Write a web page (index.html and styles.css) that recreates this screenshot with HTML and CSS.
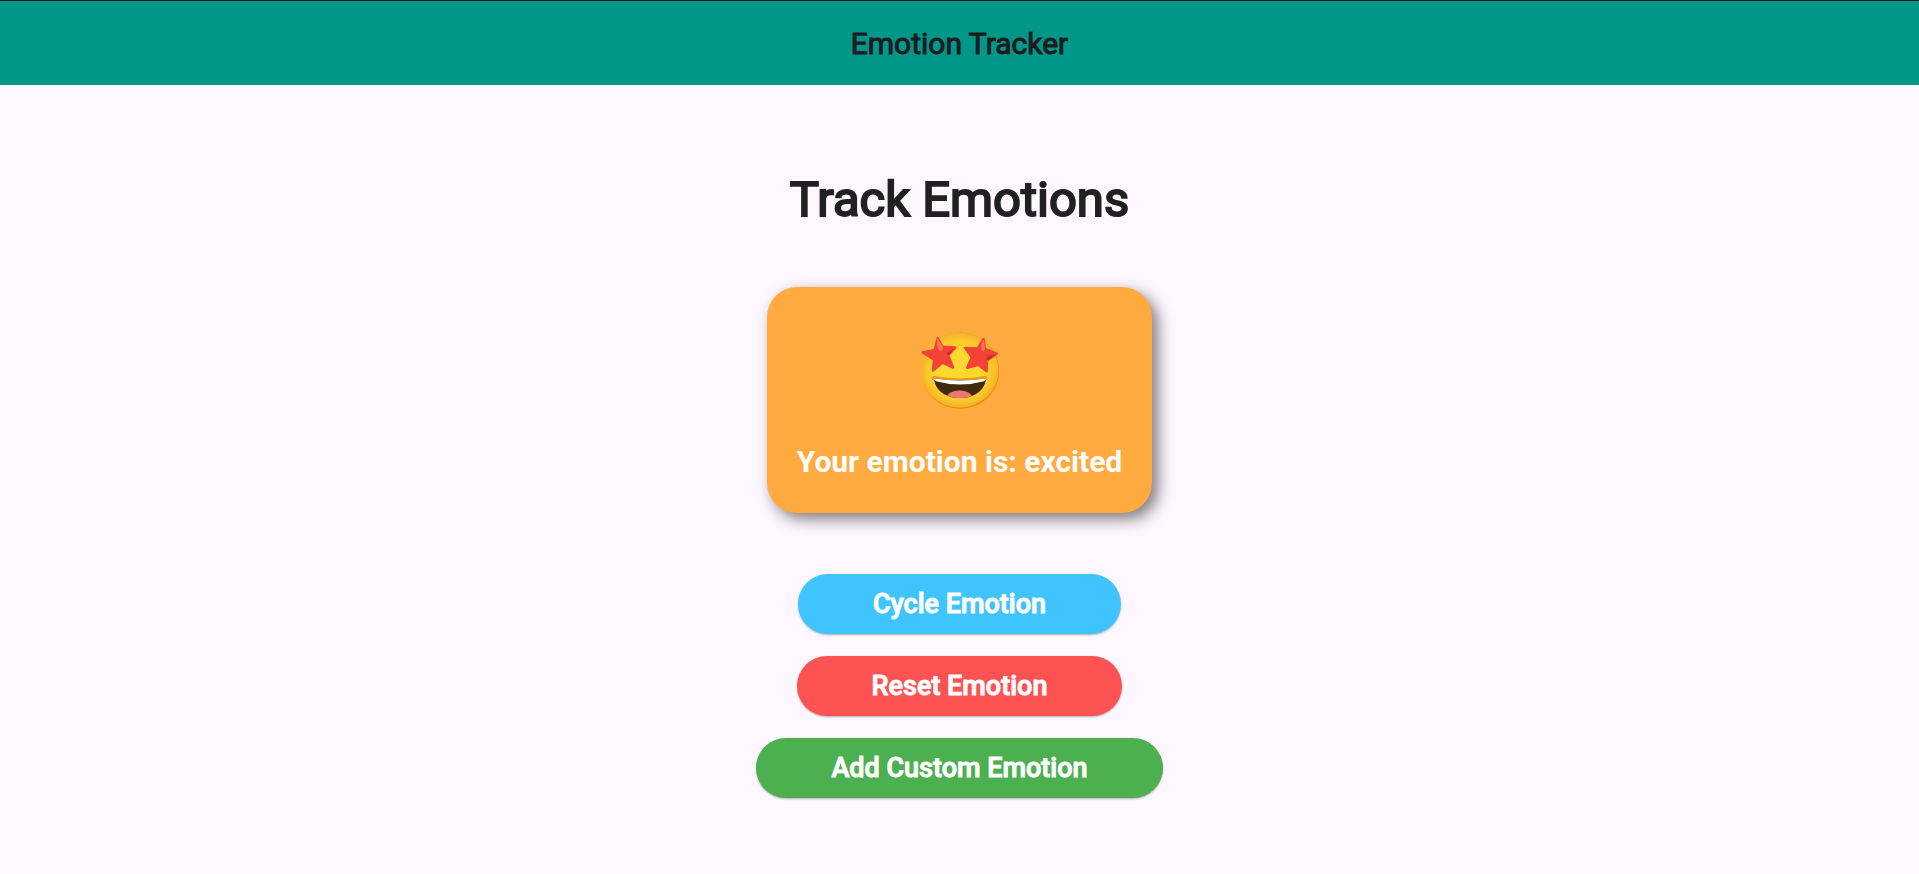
FILE: index.html
```html
<!DOCTYPE html>
<html lang="en">
<head>
<meta charset="utf-8">
<meta name="viewport" content="width=device-width, initial-scale=1">
<title>Emotion Tracker</title>
<link rel="stylesheet" href="styles.css">
</head>
<body>
<header class="app-bar">
  <h1 class="app-title">Emotion Tracker</h1>
</header>
<main class="content">
  <h2 class="heading">Track Emotions</h2>
  <section class="card">
    <svg class="emoji" viewBox="0 0 120 100" role="img" aria-label="Star-struck face">
      <defs>
        <radialGradient id="face" cx="0.5" cy="0.5" r="0.5">
          <stop offset="0.5" stop-color="#fdd82f"/>
          <stop offset="0.8" stop-color="#fbca2b"/>
          <stop offset="1" stop-color="#f5b02c"/>
        </radialGradient>
        <clipPath id="mouth"><path d="M34 58.5Q60 62.5 86 58.5C85 70 75 78 60 78S35 70 34 58.5Z"/></clipPath>
      </defs>
      <ellipse cx="60.2" cy="50.8" rx="39" ry="38.2" fill="#eb8f00"/>
      <ellipse cx="59.5" cy="50" rx="39" ry="37.6" fill="url(#face)"/>
      <path d="M34 58.3Q60 63 85 58.3" fill="none" stroke="#e79a12" stroke-width="4.5" stroke-linecap="round"/>
      <g clip-path="url(#mouth)">
        <path d="M30 55H90V80H30Z" fill="#422b0d"/>
        <path d="M32 56H88L85 61Q60 68 35 61Z" fill="#fff"/>
        <ellipse cx="59.5" cy="77.5" rx="12.5" ry="7" fill="#ed7770"/>
      </g>
      <path d="M37.7 18L42.4 26.8L55.3 27.5L48.3 35.5L53.2 47.6L42.6 42.6L33 50.5L34 39.7L22.8 32.4L34.6 29.8Z" fill="#f44336" stroke="#f44336" stroke-width="2.4" stroke-linejoin="round"/>
      <path d="M83.6 19L84.9 28.8L97 33.6L86.9 40.5L86.6 51.2L78.3 44.8L67.2 47.8L71.8 37.2L65 27.9L77.5 28.5Z" fill="#f44336" stroke="#f44336" stroke-width="2.4" stroke-linejoin="round"/>
      <path d="M37.7 18.7C36.3 22 37.2 28 39.5 30.5C41.5 31.3 43.3 29.8 43 27.5Z" fill="#ff7555"/>
      <path d="M83.7 19.5C81.5 22 80.5 28 82 30.5C84 31.5 85.3 30 85 28Z" fill="#ff7555"/>
      <path d="M55 28C52 30.5 48 31.8 46.8 33.5C46.8 34.5 47.7 35.2 48.8 35Z" fill="#c62828"/>
      <path d="M97 34C92 35.5 88 35.7 86.2 38.5C86.3 39.8 87 40.3 88 39.8Z" fill="#c62828"/>
    </svg>
    <p class="status">Your emotion is: excited</p>
  </section>
  <div class="actions">
    <button type="button" class="btn btn-cycle">Cycle Emotion</button>
    <button type="button" class="btn btn-reset">Reset Emotion</button>
    <button type="button" class="btn btn-add">Add Custom Emotion</button>
  </div>
</main>
</body>
</html>
```
FILE: styles.css
```css
* {
  box-sizing: border-box;
}

body {
  margin: 0;
  min-height: 100vh;
  background: #fef7ff;
  color: #1d1b20;
  font-family: Roboto, "Liberation Sans", sans-serif;
  font-weight: 400;
  -webkit-text-stroke: 1px currentColor;
}

h1, h2, p {
  margin: 0;
  font-weight: 400;
}

.app-bar {
  display: flex;
  justify-content: center;
  padding: 25px 24px 23px;
  border-top: 1px solid #0a1a18;
  background: #009688;
}

.app-title {
  font-size: 30px;
  line-height: 36px;
}

.content {
  display: flex;
  flex-direction: column;
  align-items: center;
  gap: 61px;
  padding: 89px 24px 60px;
}

.heading {
  font-size: 49px;
  line-height: 52px;
  color: #212121;
  -webkit-text-stroke-width: 2px;
}

.card {
  display: flex;
  flex-direction: column;
  align-items: center;
  gap: 24px;
  padding: 33px 30px;
  border-radius: 30px;
  background: #ffab40;
  box-shadow: 6px 6px 15px rgba(0, 0, 0, 0.5);
}

.emoji {
  display: block;
  width: 120px;
  height: 100px;
}

.status {
  color: #fff;
  font-size: 30px;
  font-weight: 700;
  line-height: 36px;
  -webkit-text-stroke-width: 0;
}

.actions {
  display: flex;
  flex-direction: column;
  align-items: center;
  gap: 22px;
}

.btn {
  padding: 12px 75px;
  border: 0;
  border-radius: 30px;
  color: #fff;
  font-family: inherit;
  font-size: 27px;
  font-weight: 500;
  line-height: 36px;
  box-shadow: 0 1px 2px rgba(0, 0, 0, 0.3);
  cursor: pointer;
  -webkit-text-stroke: 1px currentColor;
}

.btn-cycle {
  background: #40c4ff;
}

.btn-reset {
  background: #ff5252;
}

.btn-add {
  background: #4caf50;
}
```
